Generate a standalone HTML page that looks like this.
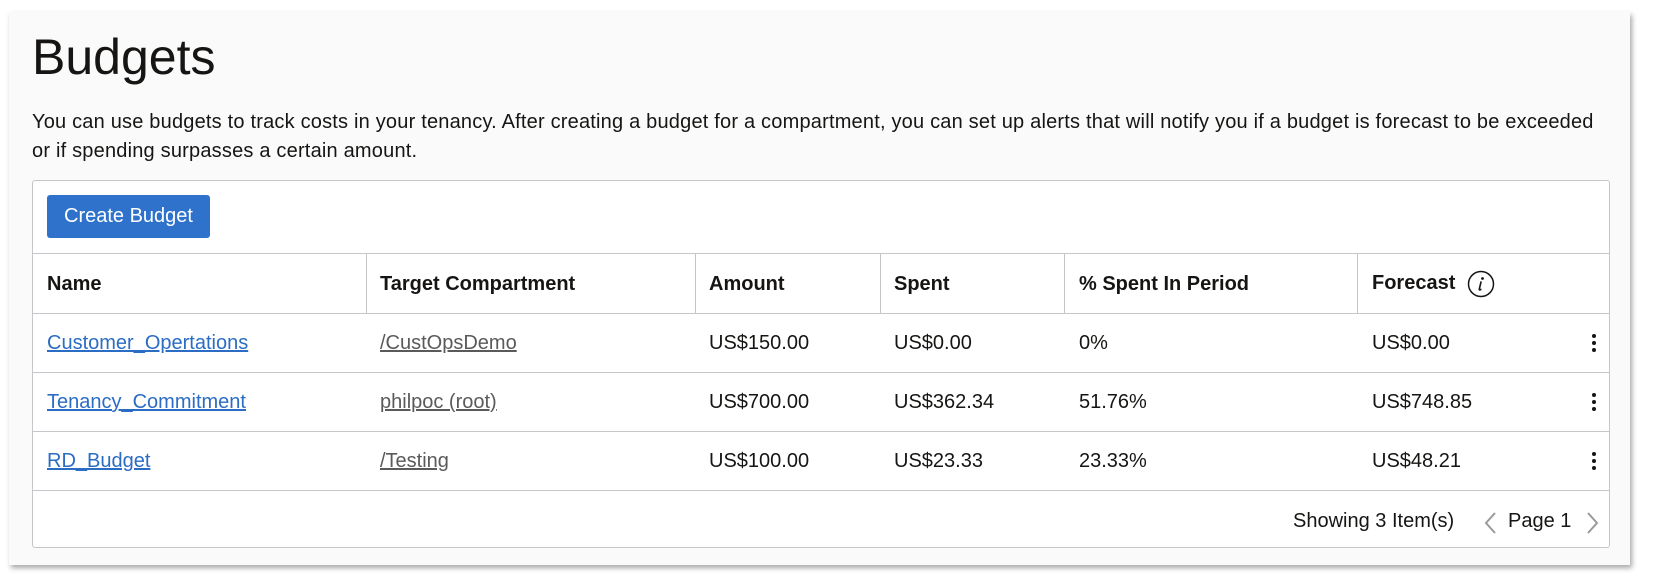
<!DOCTYPE html>
<html><head><style>
*{margin:0;padding:0;box-sizing:border-box}
body{width:1654px;height:586px;background:#fff;font-family:"Liberation Sans",sans-serif;color:#161513;position:relative;overflow:hidden}
.panel{position:absolute;left:9px;top:12px;width:1621px;height:553px;background:#fafafa;box-shadow:2px 3px 5px rgba(0,0,0,.35)}
h1{position:absolute;left:32px;top:28px;font-size:50px;font-weight:normal;letter-spacing:0}
.desc{position:absolute;left:32px;top:108px;width:1585px;font-size:20px;line-height:29px;letter-spacing:0.2px}
.box{position:absolute;left:32px;top:180px;width:1578px;height:368px;background:#fff;border:1px solid #c4c6ca;border-radius:3px}
.btn{position:absolute;left:47px;top:195px;width:163px;height:43px;background:#2e72cc;border-radius:3px;color:#fff;font-size:20px;line-height:43px;text-align:center}
.hl{position:absolute;left:33px;width:1576px;height:1px;background:#c4c6ca}
.vl{position:absolute;top:253px;height:60px;width:1px;background:#c4c6ca}
.t{position:absolute;font-size:20px;white-space:nowrap}
.b{font-weight:bold}
.lk{color:#2b6cc4;text-decoration:underline}
.gr{color:#5a5a5a;text-decoration:underline}
.keb{position:absolute;left:1592px;width:4px}
.keb i{display:block;width:4px;height:4px;border-radius:2px;background:#161513;margin-bottom:3px}
</style></head><body>
<div class="panel"></div>
<h1>Budgets</h1>
<div class="desc">You can use budgets to track costs in your tenancy. After creating a budget for a compartment, you can set up alerts that will notify you if a budget is forecast to be exceeded<br>or if spending surpasses a certain amount.</div>
<div class="box"></div>
<div class="btn">Create Budget</div>
<div class="hl" style="top:253px"></div>
<div class="hl" style="top:313px"></div>
<div class="hl" style="top:372px"></div>
<div class="hl" style="top:431px"></div>
<div class="hl" style="top:490px"></div>
<div class="vl" style="left:366px"></div>
<div class="vl" style="left:695px"></div>
<div class="vl" style="left:880px"></div>
<div class="vl" style="left:1064px"></div>
<div class="vl" style="left:1357px"></div>

<div class="t b" style="left:47px;top:273px">Name</div>
<div class="t b" style="left:380px;top:273px">Target Compartment</div>
<div class="t b" style="left:709px;top:273px">Amount</div>
<div class="t b" style="left:894px;top:273px">Spent</div>
<div class="t b" style="left:1079px;top:273px">% Spent In Period</div>
<div class="t b" style="left:1372px;top:272px">Forecast</div>
<svg style="position:absolute;left:1467px;top:270px" width="28" height="28" viewBox="0 0 28 28"><circle cx="14" cy="14" r="12.5" fill="none" stroke="#161513" stroke-width="1.5"/><circle cx="15.5" cy="8.5" r="1.4" fill="#161513"/><path d="M14 12 L12.3 19 Q12 20.5 13.8 19.5" fill="none" stroke="#161513" stroke-width="1.6" stroke-linecap="round"/></svg>

<div class="t lk" style="left:47px;top:332px">Customer_Opertations</div>
<div class="t gr" style="left:380px;top:332px">/CustOpsDemo</div>
<div class="t" style="left:709px;top:332px">US$150.00</div>
<div class="t" style="left:894px;top:332px">US$0.00</div>
<div class="t" style="left:1079px;top:332px">0%</div>
<div class="t" style="left:1372px;top:332px">US$0.00</div>
<div class="keb" style="top:334px"><i></i><i></i><i></i></div>

<div class="t lk" style="left:47px;top:391px">Tenancy_Commitment</div>
<div class="t gr" style="left:380px;top:391px">philpoc (root)</div>
<div class="t" style="left:709px;top:391px">US$700.00</div>
<div class="t" style="left:894px;top:391px">US$362.34</div>
<div class="t" style="left:1079px;top:391px">51.76%</div>
<div class="t" style="left:1372px;top:391px">US$748.85</div>
<div class="keb" style="top:393px"><i></i><i></i><i></i></div>

<div class="t lk" style="left:47px;top:450px">RD_Budget</div>
<div class="t gr" style="left:380px;top:450px">/Testing</div>
<div class="t" style="left:709px;top:450px">US$100.00</div>
<div class="t" style="left:894px;top:450px">US$23.33</div>
<div class="t" style="left:1079px;top:450px">23.33%</div>
<div class="t" style="left:1372px;top:450px">US$48.21</div>
<div class="keb" style="top:452px"><i></i><i></i><i></i></div>

<div class="t" style="left:1293px;top:510px">Showing 3 Item(s)</div>
<svg style="position:absolute;left:1482px;top:510px" width="16" height="26"><path d="M13 3 L4 13 L13 23" fill="none" stroke="#9a9a9a" stroke-width="2"/></svg>
<div class="t" style="left:1508px;top:510px">Page 1</div>
<svg style="position:absolute;left:1585px;top:510px" width="16" height="26"><path d="M3 3 L12 13 L3 23" fill="none" stroke="#9a9a9a" stroke-width="2"/></svg>
</body></html>
